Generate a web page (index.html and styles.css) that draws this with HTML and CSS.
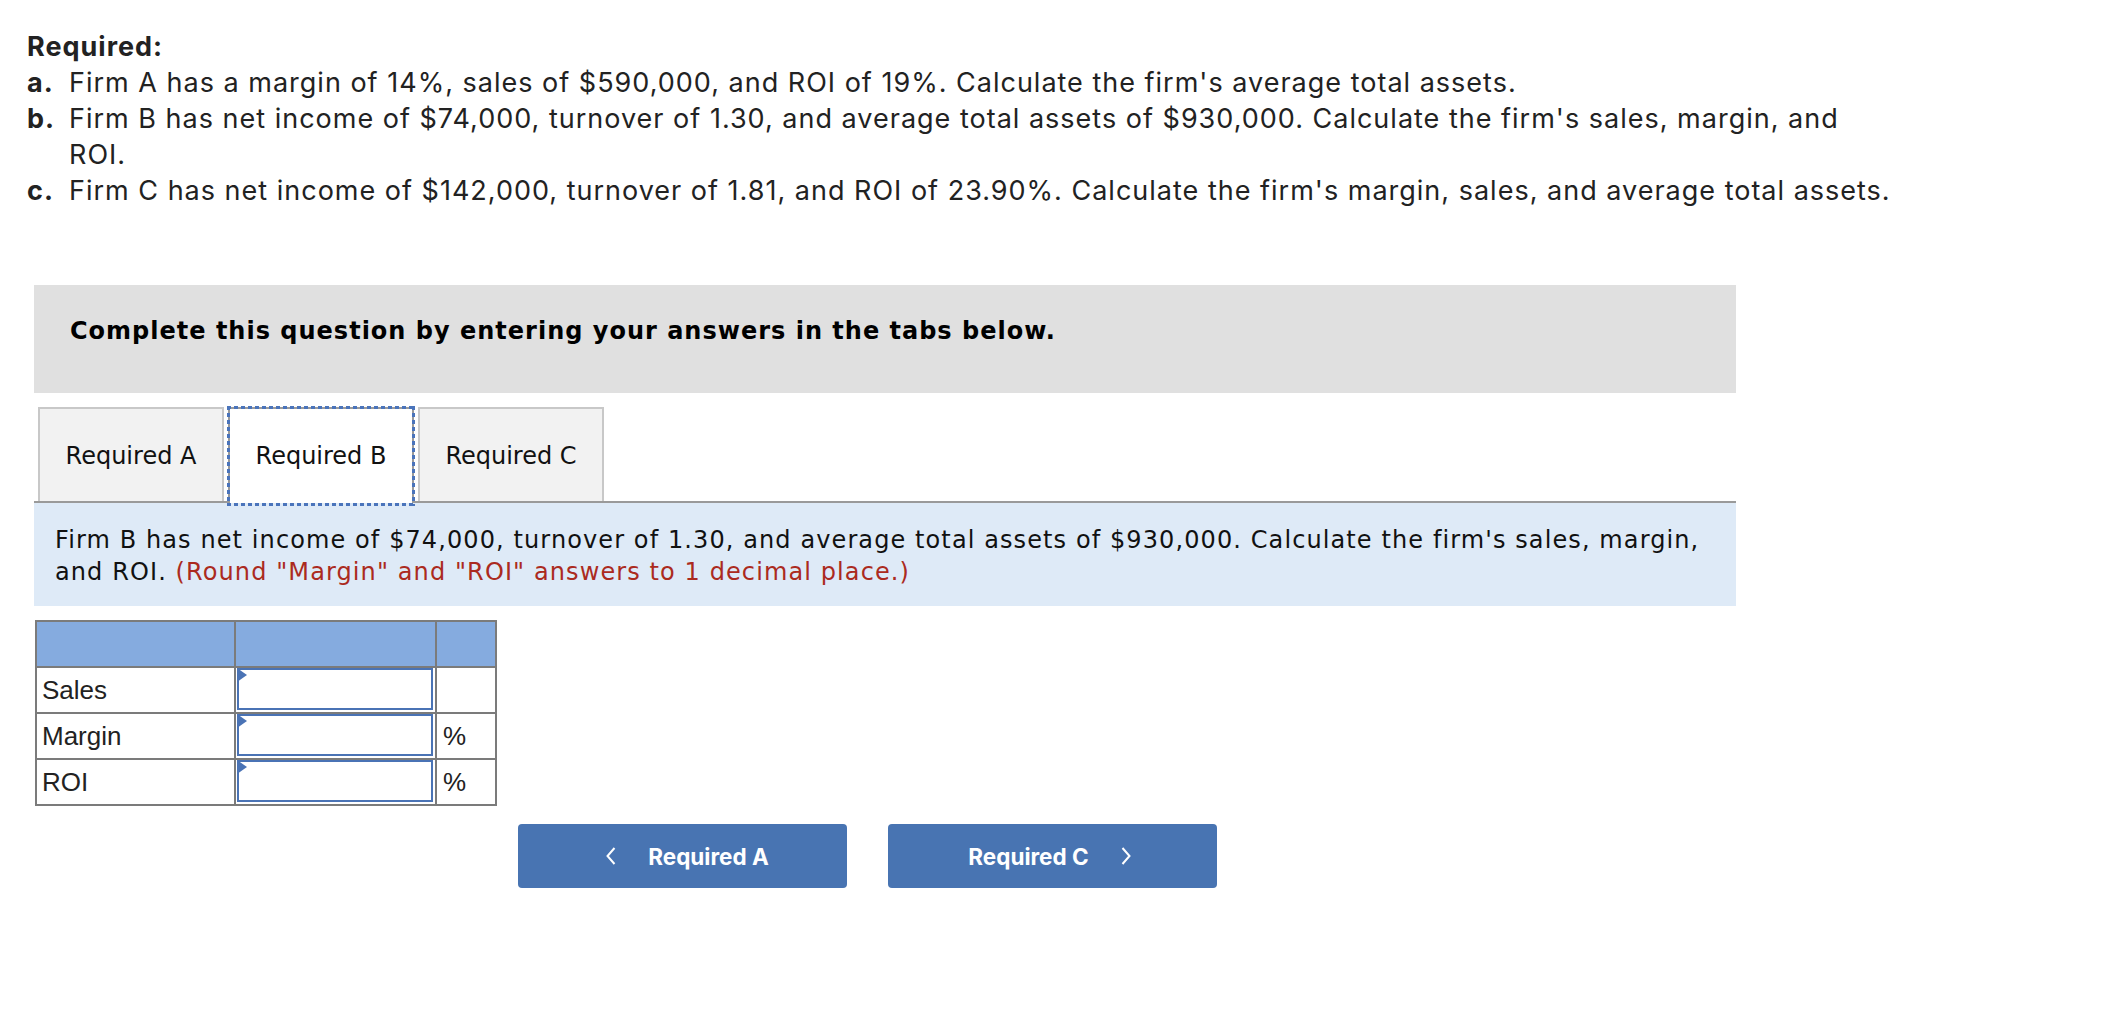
FILE: index.html
```html
<!DOCTYPE html>
<html lang="en">
<head>
<meta charset="utf-8">
<title>Required</title>
<link rel="stylesheet" href="styles.css">
</head>
<body>
<div class="page">
  <section class="required">
    <h2 class="req-title">Required:</h2>
    <ol class="req-list">
      <li><span class="lbl">a.</span><span class="txt">Firm A has a margin of 14%, sales of $590,000, and ROI of 19%. Calculate the firm's average total assets.</span></li>
      <li><span class="lbl">b.</span><span class="txt">Firm B has net income of $74,000, turnover of 1.30, and average total assets of $930,000. Calculate the firm's sales, margin, and ROI.</span></li>
      <li><span class="lbl">c.</span><span class="txt">Firm C has net income of $142,000, turnover of 1.81, and ROI of 23.90%. Calculate the firm's margin, sales, and average total assets.</span></li>
    </ol>
  </section>

  <section class="question">
    <div class="instructions">Complete this question by entering your answers in the tabs below.</div>

    <div class="tabs">
      <div class="tab">Required A</div>
      <div class="tab active">Required B</div>
      <div class="tab">Required C</div>
    </div>

    <div class="panel">Firm B has net income of $74,000, turnover of 1.30, and average total assets of $930,000. Calculate the firm's sales, margin, and ROI. <span class="hint">(Round "Margin" and "ROI" answers to 1 decimal place.)</span></div>

    <div class="answer-grid">
      <div class="cell head"></div>
      <div class="cell head"></div>
      <div class="cell head"></div>

      <div class="cell label">Sales</div>
      <div class="cell entry"><div class="input"></div></div>
      <div class="cell unit"></div>

      <div class="cell label">Margin</div>
      <div class="cell entry"><div class="input"></div></div>
      <div class="cell unit">%</div>

      <div class="cell label">ROI</div>
      <div class="cell entry"><div class="input"></div></div>
      <div class="cell unit">%</div>
    </div>

    <div class="nav">
      <button class="nav-btn prev" type="button">
        <svg class="chev" width="10" height="18" viewBox="0 0 10 18"><polyline points="8.5,1 1.5,9 8.5,17" fill="none" stroke="#fff" stroke-width="2"/></svg>
        <span>Required A</span>
      </button>
      <button class="nav-btn next" type="button">
        <span>Required C</span>
        <svg class="chev" width="10" height="18" viewBox="0 0 10 18"><polyline points="1.5,1 8.5,9 1.5,17" fill="none" stroke="#fff" stroke-width="2"/></svg>
      </button>
    </div>
  </section>
</div>
</body>
</html>
```

FILE: styles.css
```css
html, body {
  margin: 0;
  padding: 0;
  background: #ffffff;
}

.page {
  color: #1c1c1c;
}

/* ---------- Required block ---------- */
.required {
  padding: 29px 0 0 27px;
  font-family: "Inter", "Lato", sans-serif;
  font-size: 27px;
  line-height: 36px;
  letter-spacing: 1px;
  color: #222222;
}

.req-title {
  margin: 0;
  font-size: 27px;
  font-weight: 700;
  line-height: 36px;
}

.req-list {
  list-style: none;
  margin: 0;
  padding: 0;
  width: 1867px;
}

.req-list li {
  display: grid;
  grid-template-columns: 42px 1fr;
}

.lbl {
  font-weight: 700;
}

/* ---------- Question block ---------- */
.question {
  margin-top: 76px;
  margin-left: 34px;
  width: 1702px;
}

.instructions {
  box-sizing: border-box;
  height: 108px;
  padding: 32px 36px 0;
  background: #e0e0e0;
  font-family: "DejaVu Sans", Verdana, sans-serif;
  font-weight: 700;
  font-size: 24px;
  letter-spacing: 1px;
  color: #000000;
}

/* tabs */
.tabs {
  display: flex;
  gap: 4px;
  padding-left: 4px;
  margin-top: 14px;
  position: relative;
  z-index: 1;
}

.tab {
  box-sizing: border-box;
  width: 186px;
  height: 94px;
  padding-top: 2px;
  border: 2px solid #c8c8c8;
  border-bottom: none;
  background: #f2f2f2;
  display: flex;
  align-items: center;
  justify-content: center;
  font-family: "DejaVu Sans", Verdana, sans-serif;
  font-size: 24px;
  color: #111111;
}

.tab.active {
  position: relative;
  height: 96px;
  margin-bottom: -2px;
  padding-bottom: 2px;
  background: #ffffff;
  border-color: #9a9a9a;
}

.tab.active::after {
  content: "";
  position: absolute;
  top: -3px;
  left: -3px;
  right: -3px;
  bottom: -3px;
  pointer-events: none;
  background:
    repeating-linear-gradient(90deg, #4a74bb 0 4px, transparent 4px 7px) top left / 100% 3px no-repeat,
    repeating-linear-gradient(90deg, #4a74bb 0 4px, transparent 4px 7px) bottom left / 100% 3px no-repeat,
    repeating-linear-gradient(180deg, #4a74bb 0 4px, transparent 4px 7px) top left / 3px 100% no-repeat,
    repeating-linear-gradient(180deg, #4a74bb 0 4px, transparent 4px 7px) top right / 3px 100% no-repeat;
}

/* panel */
.panel {
  border-top: 2px solid #9a9a9a;
  background: #deeaf7;
  padding: 22px 15px 18px 21px;
  font-family: "DejaVu Sans", Verdana, sans-serif;
  font-size: 24px;
  line-height: 31.5px;
  letter-spacing: 1.1px;
  color: #111111;
}

.hint {
  color: #ab2a20;
}

/* answer table */
.answer-grid {
  display: grid;
  grid-template-columns: 197px 199px 58px;
  grid-auto-rows: 44px;
  gap: 2px;
  padding: 2px;
  width: max-content;
  margin: 14px 0 0 1px;
  background: #7b7b7b;
  font-family: "Liberation Sans", Arial, sans-serif;
  font-size: 26px;
  color: #222222;
}

.cell {
  background: #ffffff;
  display: flex;
  align-items: center;
}

.cell.head {
  background: #85abdf;
}

.cell.label {
  padding-left: 5px;
}

.cell.unit {
  padding-left: 6px;
}

.cell.entry {
  padding: 0 2px 2px 1px;
  align-items: stretch;
}

.input {
  position: relative;
  flex: 1;
  border: 2px solid #4a73b5;
  background: #ffffff;
}

.input::before {
  content: "";
  position: absolute;
  top: -2px;
  left: -2px;
  width: 0;
  height: 0;
  border-left: 10px solid #4a73b5;
  border-top: 7px solid transparent;
  border-bottom: 7px solid transparent;
}

/* nav buttons */
.nav {
  display: flex;
  gap: 41px;
  margin-top: 18px;
  padding-left: 484px;
}

.nav-btn {
  box-sizing: border-box;
  width: 329px;
  height: 64px;
  border: none;
  border-radius: 4px;
  background: #4874b2;
  color: #ffffff;
  display: flex;
  align-items: center;
  justify-content: center;
  gap: 32px;
  font-family: "Inter", "Lato", sans-serif;
  font-weight: 700;
  font-size: 22.5px;
  padding: 0;
}

.nav-btn.prev {
  padding-left: 10px;
}

.nav-btn.next {
  padding-right: 6px;
}

.chev {
  display: block;
}
```
